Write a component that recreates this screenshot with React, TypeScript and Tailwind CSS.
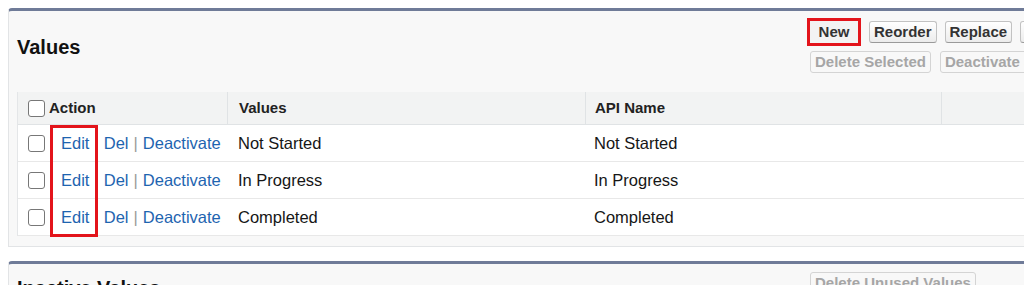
const rows = ['Not Started', 'In Progress', 'Completed']

function Btn({ label, disabled, highlight }: { label: string; disabled?: boolean; highlight?: boolean }) {
  if (highlight) {
    return (
      <div className="border-[3px] border-[#e3141b] h-[28px] w-[54px] shrink-0 flex items-center justify-center bg-[#f3f3f3]">
        <span className="text-[15px] font-bold text-[#333]">{label}</span>
      </div>
    )
  }
  return (
    <div
      className={
        disabled
          ? 'h-[22px] px-[4px] shrink-0 flex items-center rounded-[3px] border border-[#d4d4d4] bg-[#f8f8f8] text-[15px] font-bold text-[#a6a6a6] whitespace-nowrap'
          : 'h-[22px] px-[4px] shrink-0 flex items-center rounded-[3px] border border-[#c2c2c2] border-b-[#9a9a9a] bg-linear-to-b from-white to-[#ececec] text-[15px] font-bold text-[#333] whitespace-nowrap'
      }
    >
      {label}
    </div>
  )
}

function Checkbox() {
  return <div className="w-[17px] h-[17px] rounded-[3px] border-[1.5px] border-[#777] bg-white shrink-0" />
}

export default function App() {
  return (
    <div className="w-[1024px] h-[285px] overflow-hidden bg-white pt-[8px] pl-[8px]" style={{ fontFamily: '"Liberation Sans", Arial, sans-serif' }}>
      {/* Values */}
      <div className="w-[1040px] bg-[#f8f8f8] border-t-[3px] border-t-[#6f7b98] border-l border-b border-[#e2e4e6] rounded-tl-[4px] pl-[8px] pb-[10px]">
        <div className="flex h-[81px]">
          <div className="w-[790px] shrink-0 pt-[24px]">
            <h2 className="text-[20px] leading-[24px] font-bold text-[#111]">Values</h2>
          </div>
          <div className="pt-[7px] flex flex-col gap-[5px] shrink-0">
            <div className="flex items-center gap-[8px]">
              <Btn label="New" highlight />
              <Btn label="Reorder" />
              <Btn label="Replace" />
              <Btn label="Printable View" />
            </div>
            <div className="flex items-center gap-[9px] pl-[3px]">
              <Btn label="Delete Selected" disabled />
              <Btn label="Deactivate Selected" disabled />
            </div>
          </div>
        </div>

        <div className="relative border-l border-[#e4e6e8] bg-white">
          <div className="grid grid-cols-[209px_358px_356px_100px] h-[33px] bg-[#f2f3f3] border-b border-[#e0e3e5] text-[15px] font-bold text-[#222]">
            <div className="flex items-center gap-[4px] pl-[10px]">
              <Checkbox />
              <span>Action</span>
            </div>
            <div className="flex items-center pl-[11px] border-l border-[#e0e3e5]">Values</div>
            <div className="flex items-center pl-[9px] border-l border-[#e0e3e5]">API Name</div>
            <div className="border-l border-[#e0e3e5]" />
          </div>
          {rows.map(r => (
            <div key={r} className="grid grid-cols-[209px_358px_356px_100px] h-[37px] border-b border-[#e8e8e8] text-[16.5px] text-[#161616]">
              <div className="flex items-center pl-[10px]">
                <Checkbox />
                <span className="ml-[16px] text-[#1e64b0]">Edit</span>
                <span className="mx-[5px] text-[#9a9a9a]">|</span>
                <span className="text-[#1e64b0]">Del</span>
                <span className="mx-[5px] text-[#9a9a9a]">|</span>
                <span className="text-[#1e64b0]">Deactivate</span>
              </div>
              <div className="flex items-center pl-[11px]">{r}</div>
              <div className="flex items-center pl-[9px]">{r}</div>
              <div />
            </div>
          ))}
          {/* highlight overlay around Edit links */}
          <div className="absolute left-[32px] top-[33px] w-[48px] h-[112px] border-[3px] border-[#e3141b]" />
        </div>
      </div>

      {/* Inactive Values */}
      <div className="mt-[14px] w-[1040px] h-[60px] bg-[#f8f8f8] border-t-[3px] border-t-[#6f7b98] border-l border-[#e2e4e6] rounded-tl-[4px] pl-[8px] flex">
        <div className="w-[793px] shrink-0 pt-[12px]">
          <h2 className="text-[20px] leading-[24px] font-bold text-[#111]">Inactive Values</h2>
        </div>
        <div className="pt-[8px] shrink-0">
          <Btn label="Delete Unused Values" disabled />
        </div>
      </div>
    </div>
  )
}
